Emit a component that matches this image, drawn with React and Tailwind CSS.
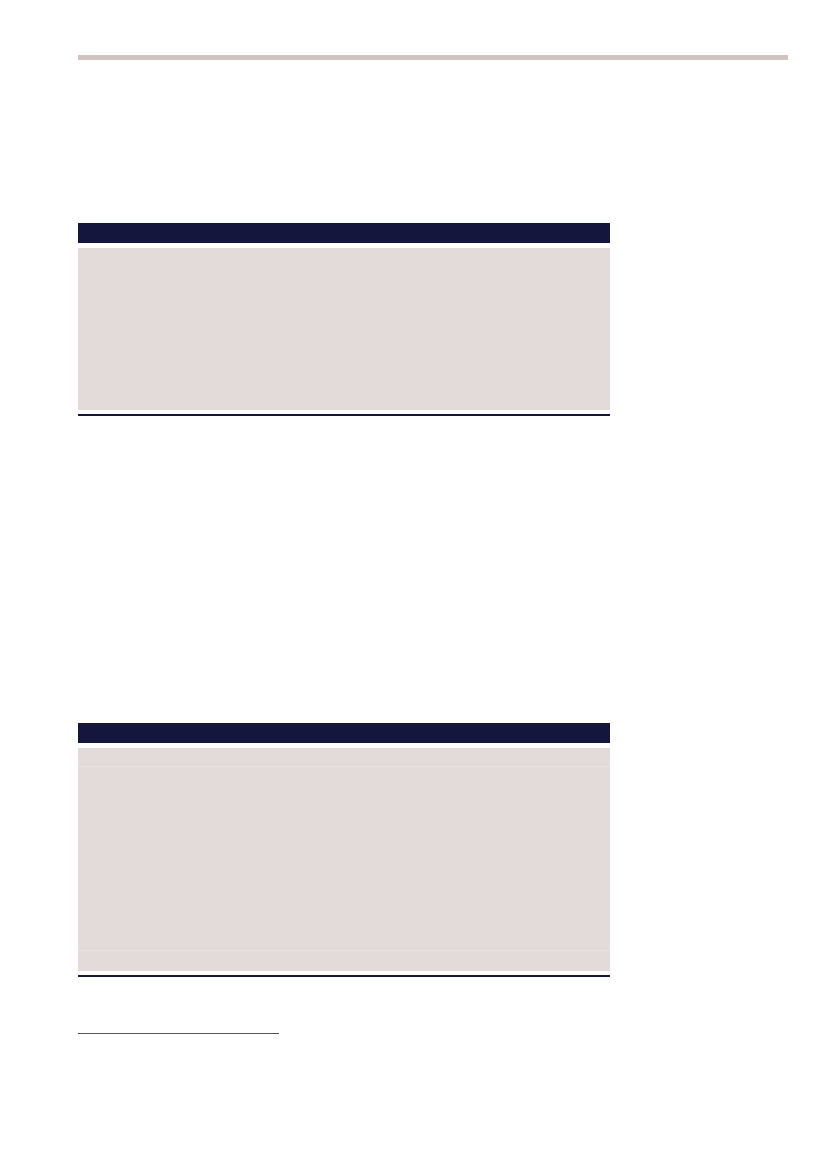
export default function App() {
  return (
    <div className="w-[827px] h-[1169px] bg-white pl-[78px] pt-[55px] font-['Liberation_Sans',sans-serif]">
      <div className="w-[710px] h-[5px] bg-[#d1c3c0]" />
      <div className="h-[163px]" />
      <div className="w-[532px]">
        <div className="h-[20px] bg-[#15163d]" />
        <div className="h-[5px]" />
        <div className="h-[162px] bg-[#e3dbda]" />
        <div className="h-[4px]" />
        <div className="h-[2px] bg-[#15163d]" />
      </div>
      <div className="h-[307px]" />
      <div className="w-[532px]">
        <div className="h-[20px] bg-[#15163d]" />
        <div className="h-[5px]" />
        <div className="flex flex-col bg-[#e3dbda]">
          <div className="h-[19px] border-b border-[#e9e3e2]" />
          <div className="h-[184px] border-b border-[#e9e3e2]" />
          <div className="h-[20px]" />
        </div>
        <div className="h-[4px]" />
        <div className="h-[2px] bg-[#15163d]" />
      </div>
      <div className="h-[56px]" />
      <div className="w-[201px] h-[1px] bg-[#555555]" />
    </div>
  );
}
